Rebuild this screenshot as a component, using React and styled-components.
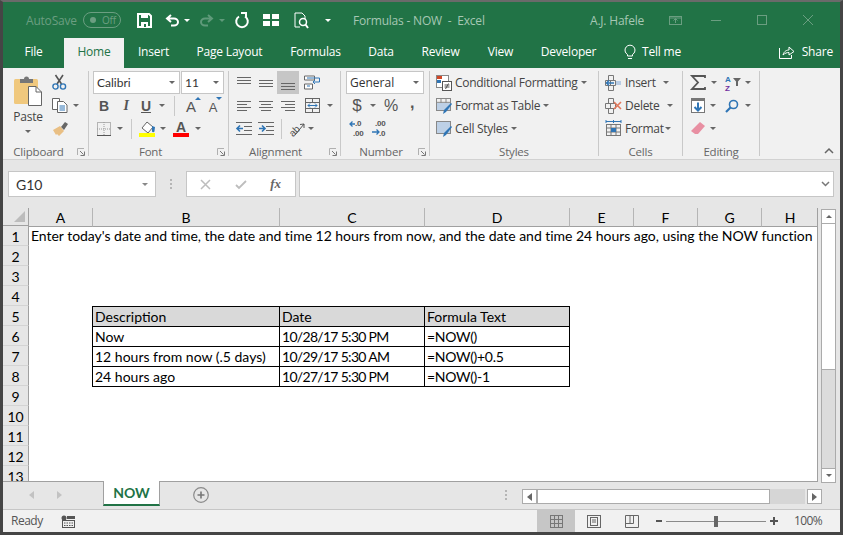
import styled, { createGlobalStyle } from "styled-components";

const Global = createGlobalStyle`
  html, body { margin: 0; padding: 0; background: #4a4a4a; overflow: hidden; }
  * { box-sizing: border-box; }
`;

const UI = `"Open Sans", "Noto Sans", sans-serif`;
const CELL = `Lato, "Liberation Sans", sans-serif`;
const DIM = "#6b9e81";

const Window = styled.div`
  width: 843px;
  height: 535px;
  border: 3px solid #454545;
  border-top: 2px solid #6a6a6a;
  display: flex;
  flex-direction: column;
  overflow: hidden;
  background: #e6e6e6;
  font-family: ${UI};
  font-size: 12px;
  letter-spacing: -0.2px;
`;

/* title bar */
const TitleBar = styled.div`
  height: 36px;
  flex: none;
  background: #217346;
  display: flex;
  align-items: center;
  color: #a6c7b4;
`;
const AutoSave = styled.span`
  color: ${DIM};
  margin-left: 23px;
  width: 57px;
`;
const Toggle = styled.span`
  width: 38px;
  height: 16px;
  border: 1px solid ${DIM};
  border-radius: 8px;
  color: ${DIM};
  font-size: 10px;
  display: flex;
  align-items: center;
  padding-left: 6px;
  gap: 6px;
  &::before {
    content: "";
    width: 6px;
    height: 6px;
    border-radius: 50%;
    background: ${DIM};
  }
`;
const Quick = styled.span`
  width: ${(p) => p.$w}px;
  flex: none;
  margin-left: ${(p) => p.$ml || 0}px;
  display: flex;
  justify-content: center;
  align-items: center;
`;
const DocTitle = styled.span`
  margin-left: 20px;
  width: 237px;
  white-space: pre;
`;
const UserName = styled.span`
  width: 78px;
`;
const WinButton = styled.span`
  width: 46px;
  flex: none;
  margin-left: ${(p) => p.$ml || 0}px;
  display: flex;
  justify-content: center;
`;

/* tabs */
const TabStrip = styled.div`
  height: 30px;
  flex: none;
  background: #217346;
  display: flex;
  align-items: stretch;
  color: #fff;
`;
const Tab = styled.div`
  width: ${(p) => p.$w}px;
  flex: none;
  display: flex;
  justify-content: center;
  align-items: center;
  padding-bottom: 3px;
  background: ${(p) => (p.$active ? "#f1f1f1" : "transparent")};
  color: ${(p) => (p.$active ? "#217346" : "#fff")};
`;
const TellMe = styled.div`
  display: flex;
  align-items: center;
  gap: 6px;
  margin-left: 14px;
  padding-bottom: 3px;
`;
const Share = styled.div`
  display: flex;
  align-items: center;
  gap: 8px;
  margin-left: auto;
  margin-right: 7px;
  padding-bottom: 3px;
`;

/* ribbon */
const Ribbon = styled.div`
  height: 92px;
  flex: none;
  background: #f1f1f1;
  border-bottom: 1px solid #d2d2d2;
  display: flex;
  position: relative;
  color: #444;
`;
const Group = styled.div`
  width: ${(p) => p.$w}px;
  flex: none;
  height: 85px;
  margin-top: 3px;
  border-right: 1px solid #c9c9c9;
  display: flex;
  flex-direction: column;
  position: relative;
`;
const GroupBody = styled.div`
  height: 71px;
  flex: none;
  padding: ${(p) => p.$pad || "0 0 0 4px"};
  display: flex;
  flex-direction: ${(p) => (p.$row ? "row" : "column")};
`;
const GroupLabel = styled.div`
  height: 14px;
  margin-bottom: -3px;
  flex: none;
  text-align: center;
  color: #666;
  font-size: 11.5px;
  line-height: 20px;
  padding-right: ${(p) => p.$shift || 0}px;
`;
const ExpanderMark = styled.span`
  position: absolute;
  right: 3px;
  bottom: 0;
  line-height: 0;
`;
const Row = styled.div`
  height: 23px;
  flex: none;
  display: flex;
  align-items: center;
  padding-left: ${(p) => p.$left || 0}px;
`;
const Tool = styled.span`
  width: ${(p) => p.$w}px;
  height: 23px;
  flex: none;
  display: flex;
  align-items: center;
  justify-content: center;
  background: ${(p) => (p.$on ? "#c6c6c6" : "transparent")};
`;
const Sep = styled.span`
  width: 1px;
  height: 20px;
  flex: none;
  margin: 0 ${(p) => p.$m || 0}px;
  background: #c9c9c9;
`;
const Combo = styled.div`
  width: ${(p) => p.$w}px;
  height: 23px;
  flex: none;
  margin-left: ${(p) => p.$ml || 0}px;
  background: #fff;
  border: 1px solid #c6c6c6;
  display: flex;
  align-items: center;
  justify-content: space-between;
  padding: 0 4px 0 3px;
  font-family: ${(p) => (p.$cell ? CELL : UI)};
  letter-spacing: 0;
  color: #333;
`;
const Caret = styled.span`
  width: 0;
  height: 0;
  flex: none;
  margin-left: ${(p) => p.$ml || 0}px;
  margin-top: ${(p) => p.$mt || 0}px;
  border-left: 3.5px solid transparent;
  border-right: 3.5px solid transparent;
  border-top: 3.5px solid ${(p) => p.$color || "#666"};
  transform: ${(p) => (p.$up ? "rotate(180deg)" : "none")};
`;
const Glyph = styled.span`
  font-family: ${(p) => (p.$serif ? `"Liberation Serif", serif` : `"Liberation Sans", sans-serif`)};
  font-size: ${(p) => p.$size || 14}px;
  font-weight: ${(p) => p.$weight || 700};
  font-style: ${(p) => (p.$italic ? "italic" : "normal")};
  text-decoration: ${(p) => (p.$under ? "underline" : "none")};
  padding-bottom: ${(p) => p.$lift || 0}px;
  color: #555;
  line-height: 1;
`;
const FontSizeBtn = styled.span`
  width: 22px;
  height: 23px;
  flex: none;
  position: relative;
  display: flex;
  align-items: flex-end;
  justify-content: center;
  padding-bottom: 2px;
  font-family: "Liberation Sans", sans-serif;
  font-size: ${(p) => (p.$grow ? 15 : 13)}px;
  color: #555;
  &::after {
    content: "";
    position: absolute;
    top: 3px;
    right: ${(p) => (p.$grow ? 1 : 2)}px;
    border-left: 3px solid transparent;
    border-right: 3px solid transparent;
    ${(p) => (p.$grow ? "border-bottom: 3px solid #2f75b5;" : "border-top: 3px solid #2f75b5;")}
  }
`;
const PasteCol = styled.div`
  width: 48px;
  flex: none;
  padding-top: 5px;
  display: flex;
  flex-direction: column;
  align-items: center;
`;
const PasteLabel = styled.span`
  margin-top: 3px;
  line-height: 16px;
  color: #444;
`;
const SmallCol = styled.div`
  width: 32px;
  flex: none;
  display: flex;
  flex-direction: column;
`;
const Command = styled.div`
  height: 23px;
  flex: none;
  display: flex;
  align-items: center;
  gap: 3px;
  white-space: nowrap;
  color: #444;
  letter-spacing: -0.28px;
`;
const CommandText = styled.span`
  width: ${(p) => (p.$w ? p.$w + "px" : "auto")};
`;
const Collapse = styled.span`
  position: absolute;
  right: 6px;
  bottom: 5px;
  line-height: 0;
`;

/* formula bar */
const FormulaBar = styled.div`
  height: 48px;
  flex: none;
  padding: 11px 6px 0 5px;
  display: flex;
  align-items: flex-start;
`;
const NameBox = styled.div`
  width: 148px;
  height: 26px;
  background: #fff;
  border: 1px solid #c6c6c6;
  color: #333;
  display: flex;
  align-items: center;
  justify-content: space-between;
  padding: 0 7px;
  font-family: ${CELL};
  font-size: 14px;
  letter-spacing: 0;
`;
const Dots = styled.span`
  width: 30px;
  flex: none;
  display: flex;
  flex-direction: column;
  align-items: center;
  gap: 2px;
  padding-top: 8px;
  & i {
    width: 2px;
    height: 2px;
    background: #b5b5b5;
  }
`;
const FxBox = styled.div`
  width: 110px;
  height: 26px;
  background: #fff;
  border: 1px solid #c6c6c6;
  display: flex;
  align-items: center;
  margin-right: 3px;
  padding-left: 1px;
`;
const FxTool = styled.span`
  width: 35px;
  display: flex;
  justify-content: center;
  font: italic 700 13px "Liberation Serif", serif;
  color: #666;
`;
const Input = styled.div`
  flex: 1;
  height: 26px;
  background: #fff;
  border: 1px solid #c6c6c6;
  display: flex;
  align-items: center;
  justify-content: flex-end;
  padding-right: 3px;
`;

/* sheet */
const SheetArea = styled.div`
  height: 274px;
  flex: none;
  display: flex;
  align-items: flex-start;
`;
const Sheet = styled.div`
  width: 815px;
  height: 274px;
  flex: none;
  overflow: hidden;
  background: #fff;
  display: grid;
  grid-template-columns: 26px 63px 187px 145px 145px 64px 64px 64px 57px;
  grid-template-rows: 18px repeat(13, 20px);
  font-family: ${CELL};
  font-size: 14px;
  letter-spacing: 0;
  color: #000;
  border-bottom: 1px solid #a0a0a0;
  border-right: 1px solid #a0a0a0;
`;
const Corner = styled.div`
  background: #e6e6e6;
  border-bottom: 1px solid #a0a0a0;
  border-right: 1px solid #a0a0a0;
  position: relative;
  &::after {
    content: "";
    position: absolute;
    right: 3px;
    bottom: 3px;
    border-left: 11px solid transparent;
    border-bottom: 11px solid #bcbcbc;
  }
`;
const ColHead = styled.div`
  background: #e6e6e6;
  border-left: ${(p) => (p.$first ? "0" : "1px solid #b5b5b5")};
  text-align: center;
  line-height: 20px;
  height: 19px;
  margin-bottom: -1px;
  border-bottom: 1px solid #a0a0a0;
  position: relative;
  z-index: 1;
`;
const RowHead = styled.div`
  background: #e6e6e6;
  border-right: 1px solid #a0a0a0;
  border-bottom: 1px solid #d4d4d4;
  text-align: center;
  line-height: 21px;
  grid-column: 1;
  grid-row: ${(p) => p.$r + 1};
`;
const Note = styled.div`
  grid-column: 2 / -1;
  grid-row: 2;
  padding: 0 0 0 2px;
  line-height: 20px;
  letter-spacing: -0.03px;
  white-space: nowrap;
`;
const Cell = styled.div`
  grid-column: ${(p) => p.$c};
  grid-row: ${(p) => p.$r};
  border-top: 1px solid #000;
  border-left: 1px solid #000;
  border-right: ${(p) => (p.$end ? "1px solid #000" : "0")};
  border-bottom: ${(p) => (p.$last ? "1px solid #000" : "0")};
  margin-right: ${(p) => (p.$end ? -1 : 0)}px;
  height: ${(p) => (p.$last ? 21 : 20)}px;
  background: ${(p) => (p.$head ? "#d9d9d9" : "#fff")};
  padding-left: 2px;
  line-height: 20px;
  letter-spacing: ${(p) => p.$track}px;
  white-space: nowrap;
  overflow: hidden;
`;
const VScroll = styled.div`
  width: 15px;
  height: 274px;
  flex: none;
  margin: 1px 0 0 3px;
  display: flex;
  flex-direction: column;
`;
const ScrollBtn = styled.div`
  width: 15px;
  height: 15px;
  flex: none;
  background: #fff;
  border: 1px solid #ababab;
  display: flex;
  align-items: center;
  justify-content: center;
  margin-left: ${(p) => p.$ml || 0}px;
`;
const VThumb = styled.div`
  height: 146px;
  flex: none;
  background: #fff;
  border: 1px solid #ababab;
  border-top: 0;
`;
const VTrack = styled.div`
  flex: 1;
  background: #dcdcdc;
  border: 1px solid #ababab;
  border-width: 0 1px;
`;

/* sheet tabs */
const TabsBar = styled.div`
  height: 28px;
  flex: none;
  display: flex;
  align-items: flex-start;
  border-bottom: 1px solid #c6c6c6;
`;
const NavArrows = styled.div`
  width: 100px;
  height: 27px;
  display: flex;
  align-items: center;
  gap: 22px;
  padding: 0 0 2px 26px;
`;
const SheetTab = styled.div`
  width: 57px;
  height: 25px;
  margin-top: -1px;
  background: #fff;
  border: 1px solid #a0a0a0;
  border-top: 0;
  border-bottom: 2px solid #217346;
  color: #217346;
  font-weight: 700;
  font-family: ${CELL};
  font-size: 14px;
  letter-spacing: 0;
  display: flex;
  align-items: center;
  justify-content: center;
  z-index: 2;
`;
const AddSheet = styled.span`
  margin: 5px 0 0 33px;
  line-height: 0;
`;
const HScroll = styled.div`
  margin: 7px 0 0 11px;
  height: 15px;
  display: flex;
`;
const HThumb = styled.div`
  width: 233px;
  background: #fff;
  border: 1px solid #ababab;
`;
const HTrack = styled.div`
  width: 35px;
  background: #d6d6d6;
`;
const HDots = styled(Dots)`
  width: 10px;
  margin-left: 292px;
  padding-top: 8px;
`;

/* status bar */
const StatusBar = styled.div`
  flex: 1;
  background: #f1f1f1;
  display: flex;
  align-items: center;
  color: #555;
`;
const Ready = styled.span`
  margin-left: 8px;
  width: 50px;
  padding-bottom: 2px;
  letter-spacing: -0.5px;
`;
const ViewBtn = styled.span`
  width: 38px;
  height: 100%;
  flex: none;
  margin-left: ${(p) => p.$ml || 0}px;
  display: flex;
  align-items: center;
  justify-content: center;
  background: ${(p) => (p.$on ? "#c6c6c6" : "transparent")};
`;
const ZoomMinus = styled.span`
  width: 6px;
  height: 2px;
  flex: none;
  margin-left: 5px;
  background: #555;
`;
const Slider = styled.span`
  width: 100px;
  height: 1px;
  flex: none;
  margin: 0 4px;
  background: #8a8a8a;
  position: relative;
  &::after {
    content: "";
    position: absolute;
    left: 48px;
    top: -5px;
    width: 4px;
    height: 11px;
    background: #666;
  }
`;
const Zoom = styled.span`
  margin-left: 16px;
  padding-bottom: 2px;
  letter-spacing: -0.6px;
`;

/* icons */
const SvgBase = styled.svg`
  display: block;
  flex: none;
  overflow: visible;
  margin-left: ${(p) => p.$ml || 0}px;
`;
const Svg = ({ w, h = w, ml, children }) => (
  <SvgBase width={w} height={h} viewBox={`0 0 ${w} ${h}`} fill="none" $ml={ml}>
    {children}
  </SvgBase>
);
const Expander = () => (
  <ExpanderMark>
    <Svg w={8} h={8}>
      <path d="M.5 7V.5H7" stroke="#b0b0b0" />
      <path d="M3 3l3.500 3.500M7.500 3.500v4h-4" stroke="#777" />
    </Svg>
  </ExpanderMark>
);
const Lines = ({ rows, w = 14 }) => (
  <Svg w={w} h={14}>
    {rows.map(([x, y, l], i) => (
      <rect key={i} x={x} y={y} width={l} height="1" fill="#666" />
    ))}
  </Svg>
);
const Grid3 = ({ c = "#666", w = 14, h = 12 }) => (
  <>
    <rect x=".5" y=".5" width={w - 1} height={h - 1} stroke={c} />
    <path d={`M0 ${h / 3}h${w}M0 ${(2 * h) / 3}h${w}M${w / 3} 0v${h}M${(2 * w) / 3} 0v${h}`} stroke={c} />
  </>
);
const Paste = () => (
  <Svg w={28} h={30}>
    <rect x="0" y="3" width="24" height="25" rx="1.500" fill="#f0c87d" />
    <path d="M6 7V3h4a2.500 2.500 0 0 1 5 0h4v4z" fill="#777" />
    <path d="M14.500 10.500h7.500l5.500 5.500v13.500h-13z" fill="#fff" stroke="#666" />
    <path d="M22 10.500V16h5.500" stroke="#666" />
  </Svg>
);
const Scissors = () => (
  <Svg w={15} h={15}>
    <path d="M3.500 0l6 9M11 0L5 9" stroke="#555" strokeWidth="1.600" />
    <circle cx="3.500" cy="11.500" r="2.600" stroke="#2f75b5" strokeWidth="1.400" />
    <circle cx="11" cy="11.500" r="2.600" stroke="#2f75b5" strokeWidth="1.400" />
  </Svg>
);
const Copy = () => (
  <Svg w={16} h={15}>
    <path d="M.5.5h7v11h-7z" fill="#fff" stroke="#666" />
    <path d="M5.500 3.500h6l3.500 3.500v7.500H5.500z" fill="#fff" stroke="#666" />
    <path d="M7.500 8h5.500M7.500 10h5.500M7.500 12h5.500" stroke="#2f75b5" />
  </Svg>
);
const Brush = () => (
  <Svg w={17} h={15}>
    <path d="M9 6l4-5 3 2-4 6z" fill="#666" />
    <path d="M1 9l7-4 4 5-5 5-2-2-1 1z" fill="#e9bf84" />
  </Svg>
);
const Borders = () => (
  <Svg w={14} h={14}>
    <rect x=".5" y=".5" width="13" height="13" stroke="#777" strokeDasharray="1 1" />
    <path d="M7 0v14M0 7h14" stroke="#999" strokeDasharray="1 1" />
    <path d="M0 13.500h14" stroke="#555" />
  </Svg>
);
const Fill = () => (
  <Svg w={16} h={16}>
    <path d="M3 7l5-6 6 5-5 6z" fill="#fff" stroke="#666" />
    <path d="M13 5l3 1-.5 4a1.200 1.200 0 0 1-2.500 0z" fill="#2f75b5" />
    <rect x="0" y="12" width="16" height="4" fill="#ffff00" />
  </Svg>
);
const FontColor = () => (
  <Svg w={16} h={16}>
    <text x="8" y="11" textAnchor="middle" fontFamily="Liberation Sans" fontWeight="700" fontSize="14" fill="#555">A</text>
    <rect x="0" y="12" width="16" height="4" fill="#ff0000" />
  </Svg>
);
const Wrap = () => (
  <Svg w={17} h={15}>
    <path d="M.5 1h10v4H.5zM.5 9h8v5H.5z" stroke="#666" fill="#fff" />
    <path d="M3 3h10M3 11h3" stroke="#2f75b5" />
    <path d="M13 3h2.500v4H9m2-2L9 7l2 2" stroke="#2f75b5" />
  </Svg>
);
const Merge = () => (
  <Svg w={15} h={15}>
    <rect x=".5" y=".5" width="14" height="14" stroke="#666" />
    <path d="M0 4.500h15M0 10.500h15M7.500 0v4M7.500 11v4" stroke="#666" />
    <path d="M3 7.500h9M5 5.500l-2 2 2 2M10 5.500l2 2-2 2" stroke="#2f75b5" />
  </Svg>
);
const Indent = ({ out }) => (
  <Svg w={16} h={13}>
    <path d="M0 .5h16M8 4.500h8M8 8.500h8M0 12.500h16" stroke="#666" />
    <path d={out ? "M1 6.500h6M4 3.500l-3 3 3 3" : "M1 6.500h6M4 3.500l3 3-3 3"} stroke="#2f75b5" strokeWidth="1.600" />
  </Svg>
);
const Orient = () => (
  <Svg w={16} h={16}>
    <text x="0" y="13" fontFamily="Liberation Sans" fontSize="10" fill="#555" transform="rotate(-45 6 10)">ab</text>
    <path d="M6 14L15 3M15 3l-4 .5M15 3v4" stroke="#555" />
  </Svg>
);
const Decimal = ({ more }) => (
  <Svg w={17} h={17}>
    <text x={more ? 5 : 3} y="6" fontFamily="Liberation Sans" fontSize="8" fontWeight="700" fill="#555">{more ? ".0" : ".00"}</text>
    <text x={more ? 3 : 7} y="16" fontFamily="Liberation Sans" fontSize="8" fontWeight="700" fill="#555">{more ? ".00" : ".0"}</text>
    <path d={more ? "M0 4h5M2.500 1.500L0 4l2.500 2.500" : "M0 12h7M4.500 9.500L7 12l-2.500 2.500"} stroke="#2f75b5" strokeWidth="1.300" />
  </Svg>
);
const CondFormat = () => (
  <Svg w={16} h={16}>
    <rect x=".5" y=".5" width="12" height="12" fill="#fff" stroke="#888" />
    <rect x="1" y="1" width="5" height="3" fill="#d24726" />
    <rect x="1" y="5" width="4" height="3" fill="#2f75b5" />
    <rect x="6.500" y="6.500" width="9" height="9" fill="#fff" stroke="#555" />
    <path d="M8.500 10h5M8.500 12h5M12.500 8.500l-3 5.500" stroke="#555" />
  </Svg>
);
const TableFmt = ({ full }) => (
  <Svg w={16} h={16}>
    <Grid3 c="#888" w={15} h={13} />
    <rect x="1" y={full ? 1 : 5} width="13" height={full ? 11 : 7} fill="#bdd0e6" />
    <path d="M15 5l1 1-6 8-3 2 1-4z" fill="#2f75b5" />
  </Svg>
);
const CellsIcon = ({ kind }) => (
  <Svg w={17} h={16}>
    <path d="M3.500.5h5v5h-5zM.5 5.500h5v5h-5zM5.500 5.500h5v5h-5zM3.500 10.500h5v5h-5z" stroke="#777" />
    {kind === "insert" && (
      <>
        <rect x="11" y="6" width="5" height="4" fill="#b9cde5" />
        <path d="M1 8h8M4 5.500L1.500 8 4 10.500" stroke="#2f75b5" strokeWidth="1.300" />
      </>
    )}
    {kind === "delete" && <path d="M9 4l7 7M16 4l-7 7" stroke="#e2785c" strokeWidth="1.600" />}
  </Svg>
);
const CellsFormat = () => (
  <Svg w={17} h={17}>
    <path d="M1 1.500h15M1 0v3M16 0v3M8.500 0v3" stroke="#2f75b5" />
    <g transform="translate(1 4)">
      <Grid3 c="#777" w={15} h={12} />
      <rect x="5" y="4" width="5" height="4" fill="#2f75b5" />
    </g>
  </Svg>
);
const Sum = () => (
  <Svg w={16} h={15}>
    <path d="M15 3V1H2l6 6.500L2 14h13v-2" stroke="#555" strokeWidth="1.800" />
  </Svg>
);
const Sort = () => (
  <Svg w={16} h={16}>
    <text x="0" y="7" fontFamily="Liberation Sans" fontWeight="700" fontSize="8" fill="#2f75b5">A</text>
    <text x="0" y="16" fontFamily="Liberation Sans" fontWeight="700" fontSize="8" fill="#7030a0">Z</text>
    <path d="M8 3h8l-3 3.500V11h-2V6.500z" fill="#666" />
  </Svg>
);
const FillDown = () => (
  <Svg w={14} h={15}>
    <rect x=".5" y=".5" width="13" height="14" fill="#fff" stroke="#777" />
    <rect x="0" y="0" width="14" height="3" fill="#777" />
    <path d="M7 4.500v8M3.500 9L7 12.500 10.500 9" stroke="#2f75b5" strokeWidth="2" />
  </Svg>
);
const Find = () => (
  <Svg w={14} h={14}>
    <circle cx="8.500" cy="5.500" r="4" stroke="#2f75b5" strokeWidth="1.600" />
    <path d="M5.500 8.500L1 13" stroke="#2f75b5" strokeWidth="2.200" />
  </Svg>
);
const Eraser = () => (
  <Svg w={14} h={13}>
    <path d="M9 0l5 4-7 8H4L0 9z" fill="#e88fa2" />
  </Svg>
);

const Save = () => (
  <Svg w={15} h={15}>
    <path d="M1 1h11l2 2v11H1z" stroke="#fff" strokeWidth="2" />
    <path d="M4 1h7v4H4z" fill="#fff" />
    <rect x="4" y="9" width="7" height="5" fill="#fff" />
    <rect x="7" y="11" width="2" height="3" fill="#217346" />
  </Svg>
);
const Undo = ({ c = "#fff", flip }) => (
  <Svg w={15} h={13}>
    <g transform={flip ? "translate(15 0) scale(-1 1)" : undefined}>
      <path d="M6 1L2 4.500 6 8M2 4.500h7a4 3.500 0 0 1 0 7H6" stroke={c} strokeWidth="2" />
    </g>
  </Svg>
);
const Refresh = () => (
  <Svg w={14} h={15}>
    <path d="M4 3.500a5.800 5.800 0 1 0 6 0" stroke="#fff" strokeWidth="2" />
    <path d="M6 0l5 0v5" stroke="#fff" strokeWidth="2" />
  </Svg>
);
const Freeze = () => (
  <Svg w={16} h={12}>
    <path d="M0 0h7v5H0zM9 0h7v5H9zM0 7h7v5H0zM9 7h7v5H9z" fill="#fff" />
  </Svg>
);
const Preview = () => (
  <Svg w={15} h={17}>
    <path d="M1 1h7l3 3v3M1 1v14h5" stroke="#fff" />
    <circle cx="9" cy="10" r="3.500" stroke="#fff" strokeWidth="1.500" />
    <path d="M11.500 12.500L14 16" stroke="#fff" strokeWidth="2" />
  </Svg>
);
const X = ({ s = 10, c = DIM, sw = 1 }) => (
  <Svg w={s} h={s}>
    <path d={`M0 0L${s} ${s}M${s} 0L0 ${s}`} stroke={c} strokeWidth={sw} />
  </Svg>
);

const tabs = [
  ["File", 61],
  ["Home", 60, true],
  ["Insert", 59],
  ["Page Layout", 93],
  ["Formulas", 79],
  ["Data", 52],
  ["Review", 67],
  ["View", 53],
  ["Developer", 83],
];
const columns = ["A", "B", "C", "D", "E", "F", "G", "H"];
const tableRows = [
  ["Description", "Date", "Formula Text"],
  ["Now", "10/28/17 5:30 PM", "=NOW()"],
  ["12 hours from now (.5 days)", "10/29/17 5:30 AM", "=NOW()+0.5"],
  ["24 hours ago", "10/27/17 5:30 PM", "=NOW()-1"],
];
// Lato digits run wider than the original's, so number columns get tightened
const columnTrack = (r, c) => (r === 0 || c === 0 ? 0 : c === 1 ? -0.7 : -0.3);

export default function App() {
  return (
    <Window>
      <Global />
      <TitleBar>
        <AutoSave>AutoSave</AutoSave>
        <Toggle>Off</Toggle>
        <Quick $w={16} $ml={15}><Save /></Quick>
        <Quick $w={16} $ml={12}><Undo /></Quick>
        <Quick $w={14}><Caret $color="#fff" /></Quick>
        <Quick $w={16} $ml={4}><Undo c="#5f9a7a" flip /></Quick>
        <Quick $w={16}><Caret $color="#5f9a7a" /></Quick>
        <Quick $w={14} $ml={5}><Refresh /></Quick>
        <Quick $w={16} $ml={14}><Freeze /></Quick>
        <Quick $w={16} $ml={14}><Preview /></Quick>
        <Quick $w={10} $ml={14}><Caret $color="#fff" /></Quick>
        <DocTitle>{"Formulas - NOW  -  Excel"}</DocTitle>
        <UserName>A.J. Hafele</UserName>
        <Quick $w={14}>
          <Svg w={13} h={9}>
            <rect x=".5" y=".5" width="12" height="8" stroke={DIM} />
            <path d="M6.500 7V3M4.500 4.500l2-2 2 2M0 2h13" stroke={DIM} />
          </Svg>
        </Quick>
        <WinButton $ml={11}><Svg w={10} h={1}><rect width="10" height="1" fill={DIM} /></Svg></WinButton>
        <WinButton><Svg w={10} h={10}><rect x=".5" y=".5" width="9" height="9" stroke={DIM} /></Svg></WinButton>
        <WinButton><X /></WinButton>
      </TitleBar>

      <TabStrip>
        {tabs.map(([name, w, active]) => (
          <Tab key={name} $w={w} $active={active}>{name}</Tab>
        ))}
        <TellMe>
          <Svg w={12} h={15}>
            <path d="M3.500 10.500a5 5 0 1 1 5 0V12h-5zM4 14.500h4" stroke="#fff" />
          </Svg>
          Tell me
        </TellMe>
        <Share>
          <Svg w={15} h={14}>
            <path d="M.5 3v10.500h12V10" stroke="#fff" />
            <path d="M4 10c1-4 4-5 6-5V2l5 4.500L10 10V7.500c-2 0-4 .5-6 2.500z" stroke="#fff" />
          </Svg>
          Share
        </Share>
      </TabStrip>

      <Ribbon>
        <Group $w={86}>
          <GroupBody $row $pad="0 0 0 1px">
            <PasteCol>
              <Paste />
              <PasteLabel>Paste</PasteLabel>
              <Caret $mt={5} />
            </PasteCol>
            <SmallCol>
              <Row><Scissors /></Row>
              <Row><Copy /><Caret $ml={5} /></Row>
              <Row><Brush /></Row>
            </SmallCol>
          </GroupBody>
          <GroupLabel $shift={14}>Clipboard</GroupLabel>
          <Expander />
        </Group>

        <Group $w={140}>
          <GroupBody>
            <Row>
              <Combo $w={87} $cell>Calibri<Caret /></Combo>
              <Combo $w={43} $ml={1} $cell>11<Caret /></Combo>
            </Row>
            <Row>
              <Tool $w={22}><Glyph>B</Glyph></Tool>
              <Tool $w={22}><Glyph $serif $italic>I</Glyph></Tool>
              <Tool $w={18}><Glyph $under>U</Glyph></Tool>
              <Tool $w={14}><Caret /></Tool>
              <Sep $m={5} />
              <FontSizeBtn $grow>A</FontSizeBtn>
              <FontSizeBtn>A</FontSizeBtn>
            </Row>
            <Row $left={3}>
              <Tool $w={16}><Borders /></Tool>
              <Tool $w={16}><Caret /></Tool>
              <Sep $m={3} />
              <Tool $w={24}><Fill /></Tool>
              <Tool $w={8}><Caret /></Tool>
              <Tool $w={28}><FontColor /></Tool>
              <Tool $w={6}><Caret /></Tool>
            </Row>
          </GroupBody>
          <GroupLabel $shift={16}>Font</GroupLabel>
          <Expander />
        </Group>

        <Group $w={112}>
          <GroupBody>
            <Row>
              <Tool $w={22}><Lines rows={[[0, 1, 14], [0, 4, 14], [0, 7, 14]]} /></Tool>
              <Tool $w={22}><Lines rows={[[0, 4, 14], [0, 7, 14], [0, 10, 14]]} /></Tool>
              <Tool $w={22} $on><Lines rows={[[0, 7, 14], [0, 10, 14], [0, 13, 14]]} /></Tool>
              <Tool $w={26}><Wrap /></Tool>
            </Row>
            <Row>
              <Tool $w={22}><Lines rows={[[0, 2, 14], [0, 5, 10], [0, 8, 14], [0, 11, 10]]} /></Tool>
              <Tool $w={22}><Lines rows={[[0, 2, 14], [2, 5, 10], [0, 8, 14], [2, 11, 10]]} /></Tool>
              <Tool $w={22}><Lines rows={[[0, 2, 14], [4, 5, 10], [0, 8, 14], [4, 11, 10]]} /></Tool>
              <Tool $w={26}><Merge /></Tool>
              <Tool $w={10}><Caret /></Tool>
            </Row>
            <Row>
              <Tool $w={22}><Indent out /></Tool>
              <Tool $w={22}><Indent /></Tool>
              <Sep $m={4} />
              <Tool $w={22}><Orient /></Tool>
              <Tool $w={6}><Caret /></Tool>
            </Row>
          </GroupBody>
          <GroupLabel $shift={18}>Alignment</GroupLabel>
          <Expander />
        </Group>

        <Group $w={89}>
          <GroupBody>
            <Row><Combo $w={78} $ml={1}>General<Caret /></Combo></Row>
            <Row $left={2}>
              <Tool $w={20}><Glyph $size={17} $weight={400}>$</Glyph></Tool>
              <Tool $w={12}><Caret /></Tool>
              <Tool $w={24}><Glyph $size={16} $weight={400}>%</Glyph></Tool>
              <Tool $w={18}><Glyph $size={16} $lift={5}>,</Glyph></Tool>
            </Row>
            <Row $left={2}>
              <Tool $w={22}><Decimal more /></Tool>
              <Tool $w={22}><Decimal /></Tool>
            </Row>
          </GroupBody>
          <GroupLabel $shift={8}>Number</GroupLabel>
          <Expander />
        </Group>

        <Group $w={169}>
          <GroupBody $pad="0 0 0 6px">
            <Command><CondFormat />Conditional Formatting<Caret /></Command>
            <Command><TableFmt />Format as Table<Caret /></Command>
            <Command><TableFmt full />Cell Styles<Caret /></Command>
          </GroupBody>
          <GroupLabel>Styles</GroupLabel>
        </Group>

        <Group $w={84}>
          <GroupBody $pad="0 0 0 6px">
            <Command><CellsIcon kind="insert" /><CommandText $w={35}>Insert</CommandText><Caret /></Command>
            <Command><CellsIcon kind="delete" /><CommandText $w={39}>Delete</CommandText><Caret /></Command>
            <Command><CellsFormat /><CommandText $w={37}>Format</CommandText><Caret /></Command>
          </GroupBody>
          <GroupLabel>Cells</GroupLabel>
        </Group>

        <Group $w={77}>
          <GroupBody $pad="0 0 0 7px">
            <Row>
              <Tool $w={16}><Sum /></Tool>
              <Tool $w={16}><Caret /></Tool>
              <Tool $w={22}><Sort /></Tool>
              <Tool $w={8}><Caret /></Tool>
            </Row>
            <Row>
              <Tool $w={16}><FillDown /></Tool>
              <Tool $w={14}><Caret /></Tool>
              <Tool $w={24}><Find /></Tool>
              <Tool $w={8}><Caret /></Tool>
            </Row>
            <Row>
              <Tool $w={16}><Eraser /></Tool>
              <Tool $w={14}><Caret /></Tool>
            </Row>
          </GroupBody>
          <GroupLabel>Editing</GroupLabel>
        </Group>

        <Collapse>
          <Svg w={10} h={6}>
            <path d="M1 5l4-4 4 4" stroke="#666" strokeWidth="1.500" />
          </Svg>
        </Collapse>
      </Ribbon>

      <FormulaBar>
        <NameBox>G10<Caret $color="#888" /></NameBox>
        <Dots><i /><i /><i /></Dots>
        <FxBox>
          <FxTool><X s={9} c="#bdbdbd" sw={1.500} /></FxTool>
          <FxTool>
            <Svg w={12} h={9}><path d="M1 5l3 3 7-7" stroke="#bdbdbd" strokeWidth="1.800" /></Svg>
          </FxTool>
          <FxTool>fx</FxTool>
        </FxBox>
        <Input>
          <Svg w={9} h={6}><path d="M1 1l3.500 3.500L8 1" stroke="#777" strokeWidth="1.500" /></Svg>
        </Input>
      </FormulaBar>

      <SheetArea>
        <Sheet>
          <Corner />
          {columns.map((name, i) => (
            <ColHead key={name} $first={i === 0}>{name}</ColHead>
          ))}
          {Array.from({ length: 13 }, (_, i) => (
            <RowHead key={i} $r={i + 1}>{i + 1}</RowHead>
          ))}
          <Note>
            Enter today's date and time, the date and time 12 hours from now, and the date and time 24 hours ago, using the NOW function
          </Note>
          {tableRows.map((row, r) =>
            row.map((text, c) => (
              <Cell key={text} $r={r + 6} $c={c + 3} $head={r === 0} $end={c === 2} $last={r === 3} $track={columnTrack(r, c)}>
                {text}
              </Cell>
            ))
          )}
        </Sheet>
        <VScroll>
          <ScrollBtn><Caret $up /></ScrollBtn>
          <VThumb />
          <VTrack />
          <ScrollBtn><Caret /></ScrollBtn>
        </VScroll>
      </SheetArea>

      <TabsBar>
        <NavArrows>
          <Svg w={6} h={8}><path d="M5 0v8L0 4z" fill="#c2c2c2" /></Svg>
          <Svg w={6} h={8}><path d="M0 0v8l5-4z" fill="#c2c2c2" /></Svg>
        </NavArrows>
        <SheetTab>NOW</SheetTab>
        <AddSheet>
          <Svg w={16} h={16}>
            <circle cx="8" cy="8" r="7.300" stroke="#8a8a8a" strokeWidth="1.200" />
            <path d="M8 4.500v7M4.500 8h7" stroke="#777" strokeWidth="1.600" />
          </Svg>
        </AddSheet>
        <HDots><i /><i /><i /></HDots>
        <HScroll>
          <ScrollBtn><Svg w={5} h={8}><path d="M5 0v8L0 4z" fill="#666" /></Svg></ScrollBtn>
          <HThumb />
          <HTrack />
          <ScrollBtn $ml={2}><Svg w={5} h={8}><path d="M0 0v8l5-4z" fill="#666" /></Svg></ScrollBtn>
        </HScroll>
      </TabsBar>

      <StatusBar>
        <Ready>Ready</Ready>
        <Svg w={14} h={13}>
          <circle cx="3" cy="3" r="2.500" fill="#555" />
          <path d="M6 1h8v3H6z" fill="#555" />
          <rect x="1.500" y="5.500" width="12" height="7" stroke="#555" />
          <path d="M3 8h9M3 10.500h9" stroke="#555" strokeDasharray="1.500 1" />
        </Svg>
        <ViewBtn $on $ml={462}>
          <Svg w={13} h={13}><rect x=".5" y=".5" width="12" height="12" stroke="#777" /><path d="M4.500 0v13M8.500 0v13M0 4.500h13M0 8.500h13" stroke="#777" /></Svg>
        </ViewBtn>
        <ViewBtn>
          <Svg w={14} h={13}><rect x=".5" y=".5" width="13" height="12" stroke="#666" /><rect x="3.500" y="2.500" width="7" height="8" stroke="#666" /><path d="M5 5h4M5 7h4" stroke="#666" /></Svg>
        </ViewBtn>
        <ViewBtn>
          <Svg w={14} h={13}><path d="M.5.5h13v12H.5zM.5 8.500h8M8.500.5v8M5 .5v8" stroke="#666" /></Svg>
        </ViewBtn>
        <ZoomMinus />
        <Slider />
        <Svg w={8} h={8}><path d="M4 0v8M0 4h8" stroke="#555" strokeWidth="2" /></Svg>
        <Zoom>100%</Zoom>
      </StatusBar>
    </Window>
  );
}
